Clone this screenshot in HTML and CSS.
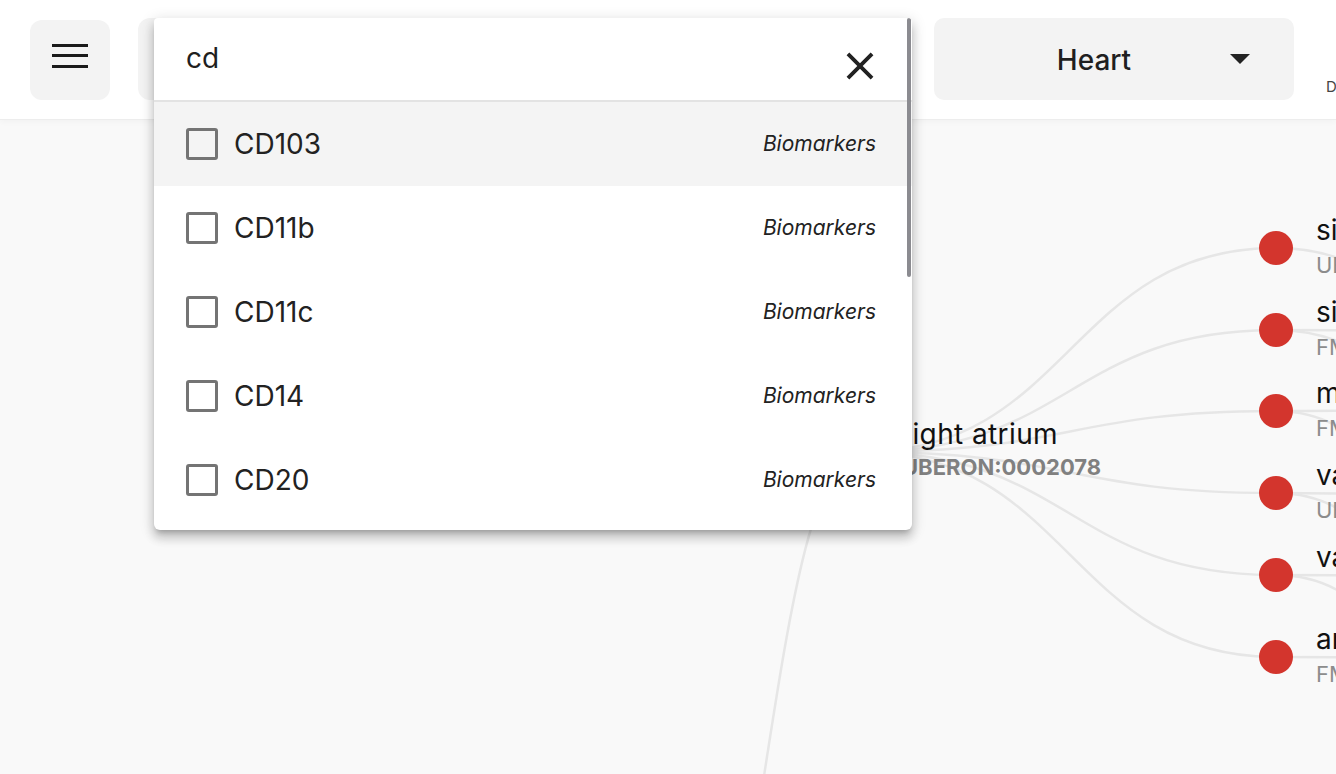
FILE: index.html
```html
<!DOCTYPE html>
<html lang="en">
<head>
<meta charset="utf-8">
<title>Heart – Biomarker search</title>
<link rel="stylesheet" href="styles.css">
</head>
<body>
<div class="app">
  <header class="topbar">
    <button class="menu-btn" aria-label="Menu">
      <svg class="menu-icon" width="36" height="24" viewBox="0 0 36 24">
        <rect x="0" y="0" width="36" height="3"/>
        <rect x="0" y="10" width="36" height="3"/>
        <rect x="0" y="21" width="36" height="3"/>
      </svg>
    </button>

    <div class="search">
      <div class="search-panel">
        <div class="search-input">
          <span class="query">cd</span>
          <svg class="clear" viewBox="0 0 24 24" width="46" height="46">
            <path d="M19 6.41L17.59 5 12 10.59 6.41 5 5 6.41 10.59 12 5 17.59 6.41 19 12 13.41 17.59 19 19 17.59 13.41 12z"/>
          </svg>
        </div>
        <ul class="results">
          <li class="result active"><span class="check"></span><span class="name">CD103</span><span class="type">Biomarkers</span></li>
          <li class="result"><span class="check"></span><span class="name">CD11b</span><span class="type">Biomarkers</span></li>
          <li class="result"><span class="check"></span><span class="name">CD11c</span><span class="type">Biomarkers</span></li>
          <li class="result"><span class="check"></span><span class="name">CD14</span><span class="type">Biomarkers</span></li>
          <li class="result"><span class="check"></span><span class="name">CD20</span><span class="type">Biomarkers</span></li>
        </ul>
        <div class="scroll-thumb"></div>
      </div>
    </div>

    <div class="organ-select">
      <span class="organ-name">Heart</span>
      <span class="caret"></span>
    </div>

    <div class="version">Data Version</div>
  </header>

  <main class="canvas">
    <svg class="tree" width="1336" height="654" viewBox="0 120 1336 654">
      <g class="links">
        <path d="M660,1100 C765,1100 765,452 862,452"/>
        <path d="M862,452 C1070,452 1070,248 1276,248"/>
        <path d="M862,452 C1070,452 1070,330 1276,330"/>
        <path d="M862,452 C1070,452 1070,411 1276,411"/>
        <path d="M862,452 C1070,452 1070,493 1276,493"/>
        <path d="M862,452 C1070,452 1070,575 1276,575"/>
        <path d="M862,452 C1070,452 1070,657 1276,657"/>

        <path d="M1276,248 C1440,248 1440,420 1600,420"/>
        <path d="M1276,330 C1440,330 1440,334 1600,334"/>
        <path d="M1276,330 C1420,330 1420,480 1560,480"/>
        <path d="M1276,411 C1440,411 1440,408 1600,408"/>
        <path d="M1276,411 C1400,411 1400,560 1520,560"/>
        <path d="M1276,493 C1440,493 1440,500 1600,500"/>
        <path d="M1276,493 C1400,493 1400,640 1520,640"/>
        <path d="M1276,575 C1440,575 1440,580 1600,580"/>
        <path d="M1276,575 C1400,575 1400,720 1520,720"/>
        <path d="M1276,657 C1440,657 1440,662 1600,662"/>
      </g>
      <g class="nodes">
        <circle cx="862" cy="452" r="17"/>
        <circle cx="1276" cy="248" r="17"/>
        <circle cx="1276" cy="330" r="17"/>
        <circle cx="1276" cy="411" r="17"/>
        <circle cx="1276" cy="493" r="17"/>
        <circle cx="1276" cy="575" r="17"/>
        <circle cx="1276" cy="657" r="17"/>
      </g>
      <g class="labels">
        <text class="node-label wide" x="901" y="444">right atrium</text>
        <text class="node-id strong" x="902" y="475">UBERON:0002078</text>

        <text class="node-label" x="1316" y="240">sinoatrial node</text>
        <text class="node-id" x="1316" y="273">UBERON:0002351</text>

        <text class="node-label" x="1316" y="322">sinus venarum</text>
        <text class="node-id" x="1316" y="355">FMA:9253</text>

        <text class="node-label" x="1316" y="403">musculi pectinati</text>
        <text class="node-id" x="1316" y="436">FMA:7237</text>

        <text class="node-label" x="1316" y="485">valve of inferior vena cava</text>
        <text class="node-id" x="1316" y="518">UBERON:0007354</text>

        <text class="node-label" x="1316" y="567">valve of coronary sinus</text>

        <text class="node-label" x="1316" y="649">anterior wall of right atrium</text>
        <text class="node-id" x="1316" y="682">FMA:7235</text>
      </g>
    </svg>
  </main>
</div>
</body>
</html>
```

FILE: styles.css
```css
* {
  box-sizing: border-box;
}

html,
body {
  margin: 0;
  height: 100%;
}

body {
  font-family: Inter, "Noto Sans", "Liberation Sans", sans-serif;
  background: #f9f9f9;
  color: #1f1f1f;
  overflow: hidden;
}

.app {
  width: 1336px;
  height: 774px;
  display: flex;
  flex-direction: column;
  overflow: hidden;
}

/* ---------- top bar ---------- */
.topbar {
  position: relative;
  z-index: 2;
  flex: none;
  height: 120px;
  display: flex;
  align-items: flex-start;
  padding: 18px 0 0 30px;
  background: #ffffff;
  border-bottom: 1px solid #ededed;
  box-shadow: 0 2px 6px rgba(0, 0, 0, 0.03);
}

.menu-btn {
  flex: none;
  display: flex;
  align-items: flex-start;
  justify-content: flex-start;
  width: 80px;
  height: 80px;
  margin-top: 2px;
  padding: 24px 0 0 22px;
  border: 0;
  border-radius: 12px;
  background: #f3f3f3;
}

.menu-icon {
  display: block;
  fill: #1a1a1a;
}

.search {
  position: relative;
  flex: none;
  width: 772px;
  height: 82px;
  margin-left: 28px;
  border-radius: 12px;
  background: #f3f3f3;
}

.search-panel {
  position: absolute;
  left: 16px;
  top: 0;
  width: 758px;
  height: 512px;
  background: #ffffff;
  border-radius: 4px 4px 6px 6px;
  overflow: hidden;
  box-shadow: 0 5px 5px -3px rgba(0, 0, 0, 0.2),
              0 8px 10px 1px rgba(0, 0, 0, 0.14),
              0 3px 14px 2px rgba(0, 0, 0, 0.12);
}

.search-input {
  height: 84px;
  display: flex;
  justify-content: space-between;
  align-items: flex-start;
  padding: 0 29px 0 32px;
  border-bottom: 2px solid #e3e3e3;
}

.query {
  margin-top: 24px;
  font-size: 28px;
  line-height: 32px;
  color: #1f1f1f;
}

.clear {
  display: block;
  margin-top: 25px;
  fill: #222222;
}

.results {
  list-style: none;
  margin: 0;
  padding: 0;
}

.result {
  height: 84px;
  display: flex;
  align-items: center;
  padding: 0 36px 0 32px;
}

.result.active {
  background: #f4f4f4;
}

.check {
  flex: none;
  width: 32px;
  height: 32px;
  border: 3px solid #747474;
  border-radius: 3px;
}

.name {
  flex: 1;
  margin-left: 16px;
  font-size: 28px;
  color: #222222;
}

.type {
  position: relative;
  top: -1px;
  font-size: 21px;
  font-style: italic;
  color: #222222;
}

.scroll-thumb {
  position: absolute;
  right: 1px;
  top: 0;
  width: 4px;
  height: 259px;
  border-radius: 2px;
  background: #8b8b90;
}

.organ-select {
  flex: none;
  width: 360px;
  height: 82px;
  margin-left: 24px;
  display: flex;
  align-items: center;
  padding-left: 24px;
  border-radius: 10px;
  background: #f3f3f3;
}

.organ-name {
  flex: 1;
  text-align: center;
  font-size: 28px;
  font-weight: 500;
  color: #1f1f1f;
  position: relative;
  top: 1px;
}

.caret {
  flex: none;
  width: 0;
  height: 0;
  margin-right: 44px;
  border-left: 10px solid transparent;
  border-right: 10px solid transparent;
  border-top: 10px solid #222222;
}

.version {
  flex: none;
  margin-left: 32px;
  margin-top: 60px;
  font-size: 15px;
  line-height: 18px;
  color: #444444;
  white-space: nowrap;
}

/* ---------- canvas ---------- */
.canvas {
  position: relative;
  z-index: 1;
  flex: 1;
  overflow: hidden;
}

.tree {
  display: block;
}

.links path {
  fill: none;
  stroke: #e6e6e6;
  stroke-width: 2.5;
}

.nodes circle {
  fill: #d3352d;
}

.node-label {
  font-family: Inter, "Noto Sans", sans-serif;
  font-size: 28px;
  fill: #111111;
}

.node-label.wide {
  letter-spacing: 0.4px;
}

.node-id {
  font-family: Inter, "Noto Sans", sans-serif;
  font-size: 22px;
  fill: #8c8c8c;
}

.node-id.strong {
  font-weight: 700;
  fill: #808080;
}
```
